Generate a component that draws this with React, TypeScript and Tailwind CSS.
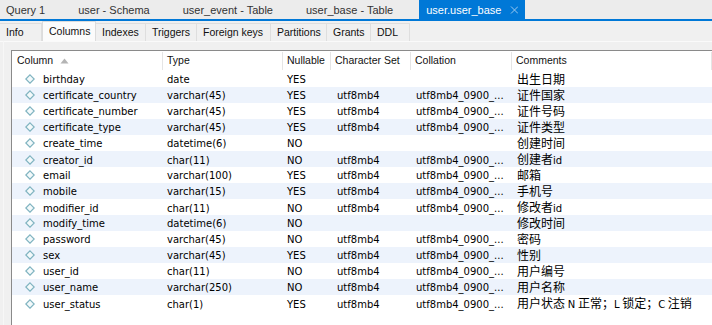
import React from "react";

const rows: [string, string, string, string, string, string][] = [
  ["birthday", "date", "YES", "", "", "出生日期"],
  ["certificate_country", "varchar(45)", "YES", "utf8mb4", "utf8mb4_0900_...", "证件国家"],
  ["certificate_number", "varchar(45)", "YES", "utf8mb4", "utf8mb4_0900_...", "证件号码"],
  ["certificate_type", "varchar(45)", "YES", "utf8mb4", "utf8mb4_0900_...", "证件类型"],
  ["create_time", "datetime(6)", "NO", "", "", "创建时间"],
  ["creator_id", "char(11)", "NO", "utf8mb4", "utf8mb4_0900_...", "创建者id"],
  ["email", "varchar(100)", "YES", "utf8mb4", "utf8mb4_0900_...", "邮箱"],
  ["mobile", "varchar(15)", "YES", "utf8mb4", "utf8mb4_0900_...", "手机号"],
  ["modifier_id", "char(11)", "NO", "utf8mb4", "utf8mb4_0900_...", "修改者id"],
  ["modify_time", "datetime(6)", "NO", "", "", "修改时间"],
  ["password", "varchar(45)", "NO", "utf8mb4", "utf8mb4_0900_...", "密码"],
  ["sex", "varchar(45)", "YES", "utf8mb4", "utf8mb4_0900_...", "性别"],
  ["user_id", "char(11)", "NO", "utf8mb4", "utf8mb4_0900_...", "用户编号"],
  ["user_name", "varchar(250)", "NO", "utf8mb4", "utf8mb4_0900_...", "用户名称"],
  ["user_status", "char(1)", "YES", "utf8mb4", "utf8mb4_0900_...", "用户状态 N 正常；L 锁定；C 注销"],
];

const topTabs = ["Query 1", "user - Schema", "user_event - Table", "user_base - Table"];

const subTabs: { label: string; w: string }[] = [
  { label: "Info", w: "w-[42px]" },
  { label: "Columns", w: "w-[54px]" },
  { label: "Indexes", w: "w-[50px]" },
  { label: "Triggers", w: "w-[51px]" },
  { label: "Foreign keys", w: "w-[74px]" },
  { label: "Partitions", w: "w-[56px]" },
  { label: "Grants", w: "w-[44px]" },
  { label: "DDL", w: "w-[39px]" },
];

function Diamond() {
  return (
    <svg width="10" height="10" viewBox="0 0 10 10" className="shrink-0">
      <path d="M5 0.8 L9.2 5 L5 9.2 L0.8 5 Z" fill="#f4fafb" stroke="#7fb3c0" strokeWidth="1.2" />
    </svg>
  );
}

function Comment({ text }: { text: string }) {
  const parts = text.split(/([A-Za-z]+)/).filter((p) => p !== "");
  return (
    <span className="whitespace-nowrap">
      {parts.map((p, i) =>
        /^[A-Za-z]+$/.test(p) ? (
          <span key={i} className="font-['DejaVu_Sans'] text-[10px]">
            {p}
          </span>
        ) : (
          <span key={i}>{p}</span>
        )
      )}
    </span>
  );
}

export default function App() {
  return (
    <div className="w-[712px] h-[325px] overflow-hidden bg-[#f0f0f0] flex flex-col font-['Liberation_Sans',sans-serif]">
      {/* top tab bar */}
      <div className="h-[19px] bg-[#ececec] flex items-stretch text-[11px] text-[#333]">
        {topTabs.map((t, i) => (
          <div key={t} className={`flex items-center pt-px ${i === 0 ? "pl-[6px]" : "pl-[7px]"} pr-[7px]`}>
            <span>{t}</span>
            <span className="w-[19px]" />
          </div>
        ))}
        <div className="flex items-center pt-px pl-[7px] pr-[7px] bg-[#0078d7] text-white">
          <span>user.user_base</span>
          <svg width="17" height="10" viewBox="0 0 17 10">
            <path d="M10 1.5 L17 8.5 M17 1.5 L10 8.5" stroke="#9cc8ee" strokeWidth="1" />
          </svg>
        </div>
      </div>
      <div className="h-[2px] bg-[#0078d7]" />

      {/* sub tabs */}
      <div className="h-[21px] flex items-end text-[10.5px] text-[#111] border-b border-[#fafafa]">
        {subTabs.map((t) =>
          t.label === "Columns" ? (
            <div
              key={t.label}
              className={`${t.w} h-[20px] bg-[#fbfbfb] border border-b-0 border-[#dcdcdc] pl-[6px] flex items-center`}
            >
              {t.label}
            </div>
          ) : (
            <div
              key={t.label}
              className={`${t.w} h-[18px] border-t border-r border-[#dedede] pl-[6px] flex items-center pt-px`}
            >
              {t.label}
            </div>
          )
        )}
      </div>

      {/* panel */}
      <div className="flex-1 flex flex-col pl-[7px] pt-[9px] ml-[3px] border-l border-[#f7f7f7] -mt-px">
        <div className="flex-1 bg-white border-l border-t border-[#8a8a8a] flex flex-col">
          {/* header */}
          <div className="grid grid-cols-[151px_120px_48px_80px_101px_1fr] h-[20px] text-[10.5px] text-[#111]">
            <div className="flex items-center pl-[5px] border-r border-[#e5e5e5] my-[1px]">
              <span>Column</span>
              <svg width="9" height="6" viewBox="0 0 9 6" className="ml-[7px]">
                <path d="M0.5 5.5 L4.5 0.5 L8.5 5.5 Z" fill="#b4b4b4" />
              </svg>
            </div>
            <div className="flex items-center pl-[4px] border-r border-[#e5e5e5] my-[1px]">Type</div>
            <div className="flex items-center pl-[4px] border-r border-[#e5e5e5] my-[1px]">Nullable</div>
            <div className="flex items-center pl-[4px] border-r border-[#e5e5e5] my-[1px]">Character Set</div>
            <div className="flex items-center pl-[4px] border-r border-[#e5e5e5] my-[1px]">Collation</div>
            <div className="flex items-center pl-[4px] border-r border-[#e5e5e5] my-[1px]">Comments</div>
          </div>
          {/* rows */}
          <div className="flex flex-col text-[10px] text-black font-['DejaVu_Sans',sans-serif]">
            {rows.map((r, i) => (
              <div
                key={r[0]}
                className={`grid grid-cols-[151px_120px_48px_80px_101px_1fr] h-[16px] items-center ${
                  i % 2 === 1 ? "bg-[#edf3fc]" : "bg-white"
                }`}
              >
                <div className="flex items-center pl-[13px] gap-[8px]">
                  <Diamond />
                  <span className="whitespace-nowrap">{r[0]}</span>
                </div>
                <div className="pl-[4px] whitespace-nowrap">{r[1]}</div>
                <div className="pl-[4px] whitespace-nowrap">{r[2]}</div>
                <div className="pl-[6px] whitespace-nowrap">{r[3]}</div>
                <div className="pl-[5px] whitespace-nowrap">{r[4]}</div>
                <div className="pl-[5px] text-[12px] font-['Noto_Sans_CJK_SC',sans-serif] leading-[16px]">
                  <Comment text={r[5]} />
                </div>
              </div>
            ))}
          </div>
        </div>
      </div>
    </div>
  );
}
